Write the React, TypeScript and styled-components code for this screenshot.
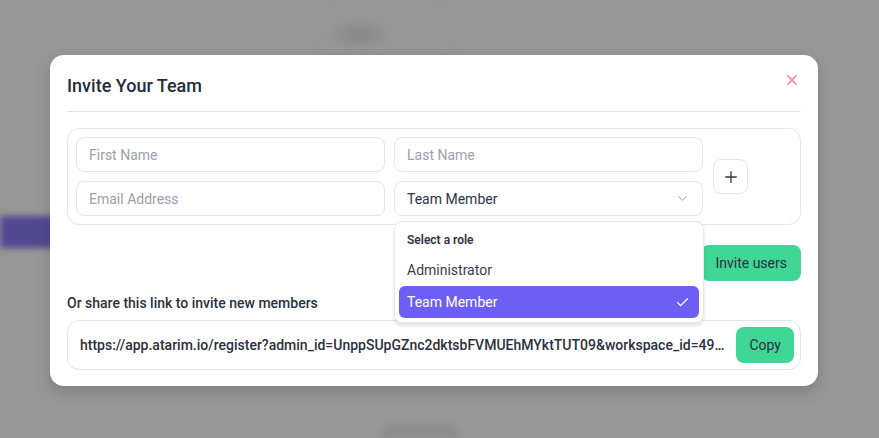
import React, { useState } from 'react';
import styled, { createGlobalStyle } from 'styled-components';
import { Check, ChevronDown, Plus, X } from 'lucide-react';

const GlobalStyle = createGlobalStyle`
  html, body {
    margin: 0;
    padding: 0;
    height: 100%;
  }
  body {
    font-family: Roboto, 'Liberation Sans', sans-serif;
    background: #979797;
    overflow: hidden;
  }
  #root {
    height: 100%;
  }
`;

const ROLES = ['Administrator', 'Team Member'];

const LINK =
  'https://app.atarim.io/register?admin_id=UnppSUpGZnc2dktsbFVMUEhMYktTUT09&workspace_id=4921&role=team_member';

const App = () => {
  const [role, setRole] = useState<string>('Team Member');
  const [open, setOpen] = useState<boolean>(true);

  return (
    <>
      <GlobalStyle />
      <Screen>
        <Backdrop>
          <SideBar>
            <SideItem />
          </SideBar>
          <PageBody>
            <HeaderBlob />
            <FooterBlob />
          </PageBody>
        </Backdrop>

        <Overlay>
          <Modal>
            <ModalHeader>
              <Title>Invite Your Team</Title>
              <CloseButton>
                <X size={16} strokeWidth={2.4} />
              </CloseButton>
            </ModalHeader>

            <FormCard>
              <FieldGrid>
                <Input placeholder="First Name" />
                <Input placeholder="Last Name" />
                <Input placeholder="Email Address" />
                <SelectWrap>
                  <Select onClick={() => setOpen((prev) => !prev)}>
                    <span>{role}</span>
                    <ChevronDown size={15} strokeWidth={1.6} color="#9aa0ab" />
                  </Select>
                  {open && (
                    <Menu>
                      <MenuLabel>Select a role</MenuLabel>
                      {ROLES.map((r) => (
                        <MenuItem
                          key={r}
                          selected={r === role}
                          onClick={() => {
                            setRole(r);
                            setOpen(false);
                          }}
                        >
                          <span>{r}</span>
                          {r === role && <Check size={15} strokeWidth={2} />}
                        </MenuItem>
                      ))}
                    </Menu>
                  )}
                </SelectWrap>
              </FieldGrid>
              <AddButton>
                <Plus size={18} strokeWidth={1.8} />
              </AddButton>
            </FormCard>

            <Actions>
              <GreenButton wide>Invite users</GreenButton>
            </Actions>

            <ShareLabel>Or share this link to invite new members</ShareLabel>
            <LinkBox>
              <LinkText>{LINK}</LinkText>
              <GreenButton>Copy</GreenButton>
            </LinkBox>
          </Modal>
        </Overlay>
      </Screen>
    </>
  );
};

export default App;

const Screen = styled.div`
  position: relative;
  width: 100%;
  height: 100%;
  overflow: hidden;
`;

const Backdrop = styled.div`
  display: flex;
  height: 100%;
  filter: blur(3px);
`;

const SideBar = styled.div`
  width: 60px;
  padding-top: 216px;
`;

const SideItem = styled.div`
  height: 32px;
  background: #514892;
`;

const PageBody = styled.div`
  flex: 1;
  display: flex;
  flex-direction: column;
  justify-content: space-between;
  padding: 6px 0 0 250px;
`;

const HeaderBlob = styled.div`
  width: 150px;
  height: 46px;
  border-radius: 23px;
  border: 1px solid #909090;
  background: radial-gradient(ellipse 34px 16px at 32% 60%, #858589, transparent);
`;

const FooterBlob = styled.div`
  width: 80px;
  height: 14px;
  margin-left: 70px;
  border-radius: 40px 40px 0 0;
  background: #8d8d8d;
`;

const Overlay = styled.div`
  position: absolute;
  inset: 0;
  padding: 55px 0 0 50px;
`;

const Modal = styled.div`
  width: 768px;
  box-sizing: border-box;
  background: #fff;
  border-radius: 14px;
  padding: 0 17px 16px;
  box-shadow: 0 6px 14px rgba(60, 60, 70, 0.25);
`;

const ModalHeader = styled.div`
  display: flex;
  align-items: center;
  justify-content: space-between;
  height: 57px;
  box-sizing: border-box;
  padding-top: 4px;
  border-bottom: 1px solid #e4e5ea;
`;

const Title = styled.h2`
  margin: 0;
  font-size: 18px;
  font-weight: 500;
  color: #262b3b;
`;

const CloseButton = styled.button`
  display: flex;
  align-items: center;
  justify-content: center;
  width: 20px;
  height: 20px;
  padding: 0;
  margin: -10px -1px 0 0;
  border: none;
  background: none;
  color: #f27ca3;
`;

const FormCard = styled.div`
  display: flex;
  align-items: center;
  gap: 10px;
  margin-top: 16px;
  padding: 8px;
  border: 1px solid #e4e5ea;
  border-radius: 12px;
`;

const FieldGrid = styled.div`
  display: grid;
  grid-template-columns: 309px 309px;
  gap: 9px;
`;

const Input = styled.input`
  box-sizing: border-box;
  height: 35px;
  width: 100%;
  padding: 0 12px;
  border: 1px solid #e5e6ea;
  border-radius: 8px;
  font-family: inherit;
  font-size: 14px;
  color: #2e3343;
  outline: none;

  &::placeholder {
    color: #9ca0aa;
  }
`;

const SelectWrap = styled.div`
  position: relative;
`;

const Select = styled.div`
  box-sizing: border-box;
  height: 35px;
  display: flex;
  align-items: center;
  justify-content: space-between;
  padding: 0 12px;
  border: 1px solid #e5e6ea;
  border-radius: 8px;
  font-size: 14px;
  color: #2e3343;
  cursor: pointer;
`;

const Menu = styled.div`
  position: absolute;
  top: calc(100% + 5px);
  left: 0;
  right: -1px;
  z-index: 2;
  padding: 4px;
  background: #fff;
  border: 1px solid #e6e7eb;
  border-radius: 8px;
  box-shadow: 0 3px 3px rgba(40, 40, 60, 0.12);
`;

const MenuLabel = styled.div`
  height: 28px;
  display: flex;
  align-items: center;
  padding: 0 8px;
  font-size: 12px;
  font-weight: 600;
  color: #2e3343;
`;

const MenuItem = styled.div<{ selected?: boolean }>`
  height: 32px;
  display: flex;
  align-items: center;
  justify-content: space-between;
  padding: 0 9px 0 8px;
  border-radius: 6px;
  font-size: 14px;
  color: ${(props) => (props.selected ? '#fff' : '#3a3e4b')};
  background: ${(props) => (props.selected ? '#6c5ff1' : 'transparent')};
  cursor: pointer;
`;

const AddButton = styled.button`
  width: 35px;
  height: 35px;
  display: flex;
  align-items: center;
  justify-content: center;
  padding: 0;
  background: #fff;
  border: 1px solid #e5e6ea;
  border-radius: 8px;
  color: #343948;
`;

const Actions = styled.div`
  display: flex;
  justify-content: flex-end;
  margin-top: 20px;
`;

const GreenButton = styled.button<{ wide?: boolean }>`
  height: 36px;
  padding: 0 ${(props) => (props.wide ? '14px' : '13px')};
  flex-shrink: 0;
  border: none;
  border-radius: 8px;
  background: #3fd696;
  font-family: inherit;
  font-size: 14px;
  font-weight: 400;
  color: #2b3040;
`;

const ShareLabel = styled.div`
  margin-top: 12px;
  line-height: 20px;
  font-size: 14px;
  font-weight: 500;
  color: #2b3040;
`;

const LinkBox = styled.div`
  display: flex;
  align-items: center;
  gap: 10px;
  height: 50px;
  box-sizing: border-box;
  margin-top: 7px;
  padding: 0 6px 0 12px;
  border: 1px solid #e4e5ea;
  border-radius: 12px;
`;

const LinkText = styled.div`
  flex: 1;
  min-width: 0;
  overflow: hidden;
  white-space: nowrap;
  text-overflow: ellipsis;
  font-size: 14px;
  font-weight: 500;
  color: #2b3040;
`;
